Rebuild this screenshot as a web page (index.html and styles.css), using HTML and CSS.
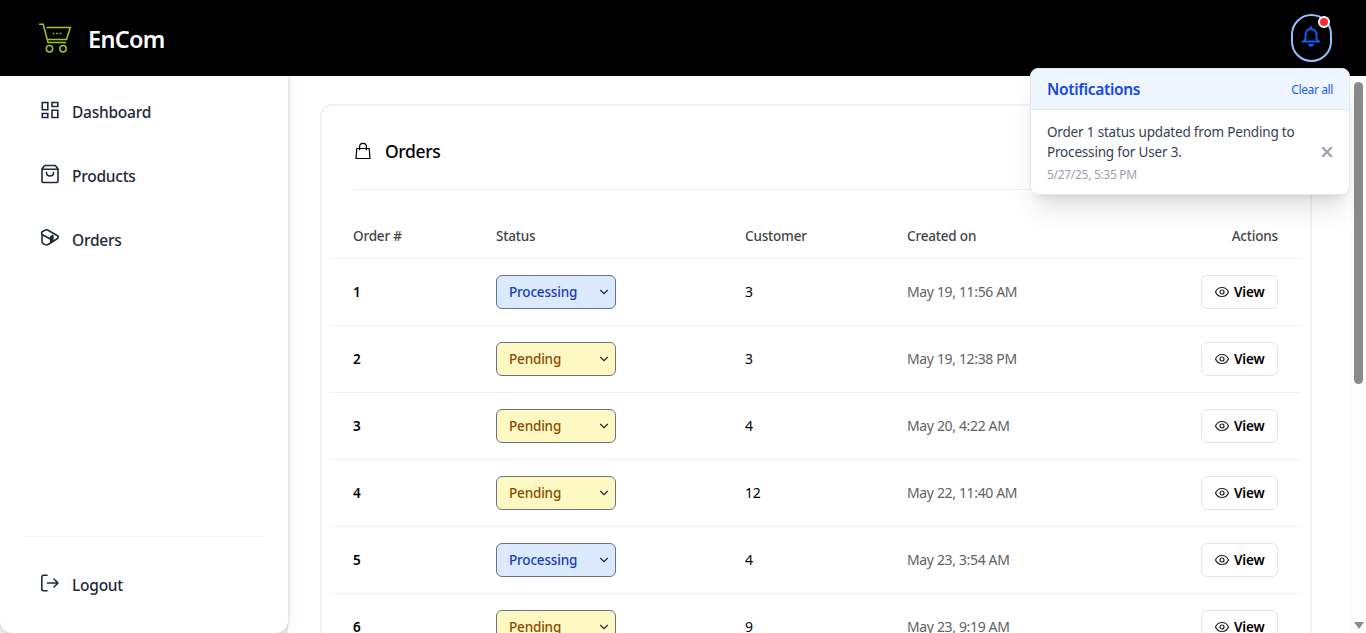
FILE: index.html
```html
<!DOCTYPE html>
<html lang="en">
<head>
<meta charset="utf-8">
<title>EnCom</title>
<link rel="stylesheet" href="styles.css">
</head>
<body>
<svg width="0" height="0" class="defs">
  <symbol id="eye" viewBox="0 0 16 16"><g fill="none" stroke="currentColor" stroke-width="1.2"><path d="M1.500 8C2.800 5 5.200 3.500 8 3.500S13.200 5 14.500 8C13.200 11 10.800 12.500 8 12.500S2.800 11 1.500 8Z"/><circle cx="8" cy="8" r="2"/></g></symbol>
  <symbol id="chev" viewBox="0 0 10 6"><path d="M1.300 1L5 4.700 8.700 1" fill="none" stroke="currentColor" stroke-width="1.200"/></symbol>
</svg>
<header class="topbar">
  <div class="brand">
    <svg class="logo" viewBox="0 0 34 32" fill="none" stroke="#9ec52a" stroke-width="1.500"><path d="M1 2.300h4.200L10 20.500M8.500 5.500h23.800L28.500 17.500H9.500M9.500 20.500h18.500"/><circle cx="11.500" cy="26.800" r="3.200"/><circle cx="25" cy="26.800" r="3.200"/><path d="M14.700 11.500h1.600M18.200 11.500h1.600M21.700 11.500h1.600"/></svg>
    <span class="brand-name">EnCom</span>
  </div>
  <button class="bell" aria-label="Notifications">
    <svg width="20" height="22" viewBox="0 0 20 22"><path d="M1.700 15.500h16.600M3.200 15.200l1.300-2.200V8.500a5.500 5.500 0 0 1 11 0V13l1.300 2.200M10 3V1" fill="none" stroke="#155dfc" stroke-width="1.900" stroke-linecap="round" stroke-linejoin="round"/><path d="M7 17.800h6a3 2.800 0 0 1-6 0Z" fill="#155dfc"/></svg>
    <span class="dot"></span>
  </button>
</header>
<div class="shell">
  <nav class="sidebar">
    <div class="links">
      <a class="link"><svg class="ico" viewBox="0 0 20 20" fill="none" stroke="currentColor" stroke-width="1.600"><path d="M2.300 2.500h5.500v7.300H2.300zM12 2.500h5.800v4H12zM2.300 13.500h5.500v4H2.300zM12 10.200h5.800v7.300H12z"/></svg><span>Dashboard</span></a>
      <a class="link"><svg class="ico" viewBox="0 0 20 20" fill="none" stroke="currentColor" stroke-width="1.600" stroke-linejoin="round" stroke-linecap="round"><path d="M2 4.800L4.700 1.500h10.600L18 4.800V17a1.500 1.500 0 0 1-1.500 1.500h-13A1.500 1.500 0 0 1 2 17ZM2 5.200h16M6.500 8.500c0 4.700 7 4.700 7 0"/></svg><span>Products</span></a>
      <a class="link"><svg class="ico" viewBox="0 0 20 20" fill="none" stroke="currentColor" stroke-width="1.600" stroke-linejoin="round" stroke-linecap="round"><path d="M2 6.500Q.800 4.300 3 3.200L5.500 2Q6.800 1.500 8 2.200L17.500 7.700Q19.300 9 17.500 10.500L8.500 16.200Q7 17.500 5.200 16.600L3.200 15.500Q2 14.800 2 13.300ZM2 6.500L10.700 11.200"/><path d="M10.700 14.500V9Q10.700 8 12.800 7.500V13.300M11.700 8.500V13.800"/></svg><span>Orders</span></a>
    </div>
    <div class="foot"><a class="link"><svg class="ico" viewBox="0 0 20 20" fill="none" stroke="currentColor" stroke-width="1.600" stroke-linecap="round" stroke-linejoin="round"><path d="M7 2.200H3.500Q1.800 2.200 1.800 3.900v12.100q0 1.700 1.700 1.700H7M7.500 10h10.500M14 6L18 10l-4 4"/></svg><span>Logout</span></a></div>
  </nav>
  <main class="main">
    <section class="card">
      <div class="card-head"><svg width="16" height="18" viewBox="0 0 16 18" fill="none" stroke="#000" stroke-width="1.200"><path d="M1.800 6.500h12.400L15 16.500H1ZM4.600 8.300V4.800a3.400 3.400 0 0 1 6.800 0V8.300"/></svg><h1>Orders</h1></div>
      <table class="orders">
        <colgroup><col class="c1"><col class="c2"><col class="c3"><col class="c4"><col></colgroup>
        <thead><tr><th>Order #</th><th>Status</th><th>Customer</th><th>Created on</th><th class="right">Actions</th></tr></thead>
        <tbody>
          <tr><td class="num">1</td><td class="ctl"><div class="select blue">Processing<svg><use href="#chev"/></svg></div></td><td>3</td><td class="date">May 19, 11:56 AM</td><td class="ctl right"><button class="view"><svg><use href="#eye"/></svg><span>View</span></button></td></tr>
          <tr><td class="num">2</td><td class="ctl"><div class="select yellow">Pending<svg><use href="#chev"/></svg></div></td><td>3</td><td class="date">May 19, 12:38 PM</td><td class="ctl right"><button class="view"><svg><use href="#eye"/></svg><span>View</span></button></td></tr>
          <tr><td class="num">3</td><td class="ctl"><div class="select yellow">Pending<svg><use href="#chev"/></svg></div></td><td>4</td><td class="date">May 20, 4:22 AM</td><td class="ctl right"><button class="view"><svg><use href="#eye"/></svg><span>View</span></button></td></tr>
          <tr><td class="num">4</td><td class="ctl"><div class="select yellow">Pending<svg><use href="#chev"/></svg></div></td><td>12</td><td class="date">May 22, 11:40 AM</td><td class="ctl right"><button class="view"><svg><use href="#eye"/></svg><span>View</span></button></td></tr>
          <tr><td class="num">5</td><td class="ctl"><div class="select blue">Processing<svg><use href="#chev"/></svg></div></td><td>4</td><td class="date">May 23, 3:54 AM</td><td class="ctl right"><button class="view"><svg><use href="#eye"/></svg><span>View</span></button></td></tr>
          <tr><td class="num">6</td><td class="ctl"><div class="select yellow">Pending<svg><use href="#chev"/></svg></div></td><td>9</td><td class="date">May 23, 9:19 AM</td><td class="ctl right"><button class="view"><svg><use href="#eye"/></svg><span>View</span></button></td></tr>
        </tbody>
      </table>
    </section>
  </main>
  <div class="scrollbar"><div class="thumb"></div><div class="arrow"></div></div>
</div>
<aside class="popover">
  <div class="pop-head"><h2>Notifications</h2><span class="clear">Clear all</span></div>
  <div class="pop-item">
    <div><p class="msg">Order 1 status updated from Pending to<br>Processing for User 3.</p><p class="time">5/27/25, 5:35 PM</p></div>
    <svg width="12" height="12" viewBox="0 0 12 12"><path d="M1.300 1.300l9.400 9.400M10.700 1.300l-9.400 9.400" stroke="#99a1af" stroke-width="2.200"/></svg>
  </div>
</aside>
</body>
</html>
```
FILE: styles.css
```css
* { box-sizing: border-box; margin: 0; }
body { height: 633px; overflow: hidden; background: #fff; font-family: "Noto Sans", "Open Sans", sans-serif; font-size: 14px; color: #000; display: flex; flex-direction: column; position: relative; }
.defs { position: absolute; }
button { font: inherit; color: inherit; background: none; }
.topbar { height: 76px; flex: none; background: #000; display: flex; justify-content: space-between; align-items: center; padding: 0 34px 0 38px; }
.brand { display: flex; align-items: center; gap: 16px; }
.logo { width: 34px; height: 32px; }
.brand-name { color: #fff; font-size: 23.500px; font-weight: 600; letter-spacing: -.7px; line-height: 32px; padding-top: 2px; }
.bell { position: relative; width: 41px; height: 48px; border: 2px solid #8ec5ff; border-radius: 21px; padding: 0; display: flex; align-items: center; justify-content: center; }
.bell svg { margin: -2px 1px 0 0; }
.dot { position: absolute; right: 0; top: 0; width: 12px; height: 12px; border-radius: 50%; background: #fb2c36; border: 2px solid #fff; }
.shell { flex: 1; min-height: 0; display: flex; background: linear-gradient(to right, #ececee 288px, #fff 288px); }
.sidebar { width: 288px; flex: none; background: #fff; border-radius: 0 0 12px 12px; box-shadow: 0 0 4px rgba(0,0,0,.18), 4px 0 12px rgba(0,0,0,.03); clip-path: inset(0 -20px 0 0); display: flex; flex-direction: column; justify-content: space-between; padding: 12px 24px 16px; }
.links { display: flex; flex-direction: column; gap: 16px; }
.link { height: 48px; display: flex; align-items: center; gap: 12px; padding: 0 16px; font-size: 15.500px; font-weight: 500; color: #1e2939; letter-spacing: -.24px; }
.link span { padding-bottom: 1px; }
.ico { width: 20px; height: 20px; margin-top: -4px; }
.foot { border-top: 1px solid #f3f3f5; padding-top: 24px; height: 81px; }
.main { flex: 1; min-width: 0; padding: 28px 40px 0 32px; overflow: hidden; }
.card { width: 992px; height: 700px; border: 2px solid #f2f2f2; border-radius: 12px; padding: 0 7px; }
.card-head { height: 84px; margin: 0 24px 24px; display: flex; align-items: center; gap: 14px; padding: 7px 0 0 2px; border-bottom: 1px solid #efefef; }
h1 { font-size: 17.500px; font-weight: 500; letter-spacing: -.35px; }
.orders { width: 973px; table-layout: fixed; border-collapse: separate; border-spacing: 0; }
.c1 { width: 143px; }
.c2 { width: 249px; }
.c3 { width: 162px; }
.c4 { width: 230px; }
th, td { padding: 0 24px; text-align: left; border-bottom: 1px solid #f1f1f1; }
th { height: 45px; font-weight: 500; font-size: 13.500px; color: #454545; letter-spacing: -.18px; }
td { height: 67px; padding-bottom: 2px; letter-spacing: -.35px; }
td.ctl { padding-bottom: 0; }
td.num { font-weight: 600; font-size: 13.500px; padding-bottom: 0; }
.date { color: #626262; letter-spacing: -.35px; }
.right { text-align: right; }
.select { width: 120px; height: 34px; border: 1px solid #6a7282; border-radius: 6px; display: flex; align-items: center; justify-content: space-between; padding: 0 6px 0 12px; font-size: 13.500px; font-weight: 500; letter-spacing: -.17px; }
.select svg { width: 10px; height: 6px; color: #222; }
.blue { background: #dbeafe; color: #193cb8; }
.yellow { background: #fef9c2; color: #894b00; }
.view { width: 77px; height: 34px; border: 1px solid #e5e5e5; border-radius: 6px; display: inline-flex; align-items: center; gap: 4px; padding: 0 12px; font-weight: 600; font-size: 13.500px; letter-spacing: -.15px; vertical-align: middle; }
.view span { padding-bottom: 1px; }
.view svg { width: 16px; height: 16px; color: #222; }
.scrollbar { width: 15px; background: #fcfcfc; display: flex; flex-direction: column; align-items: center; justify-content: space-between; padding: 6px 0 4px; }
.thumb { width: 9px; height: 302px; border-radius: 5px; background: #8b8b8b; }
.arrow { border: 5px solid transparent; border-top: 7px solid #8b8b8b; border-bottom: 0; }
.popover { position: absolute; left: 1030px; top: 68px; width: 320px; height: 127px; background: #fff; border: 1px solid #e5e7eb; border-radius: 8px; overflow: hidden; box-shadow: 0 20px 25px -5px rgba(0,0,0,.1), 0 8px 10px -6px rgba(0,0,0,.1); }
.pop-head { height: 41px; display: flex; align-items: center; justify-content: space-between; padding: 0 16px; background: #eff6ff; border-bottom: 1px solid #e5e7eb; }
h2 { font-size: 15.500px; font-weight: 600; color: #1447e6; letter-spacing: -.32px; }
.clear { font-size: 12px; color: #155dfc; letter-spacing: -.38px; padding-top: 1px; }
.pop-item { display: flex; justify-content: space-between; align-items: center; padding: 12px 16px; }
.msg { font-size: 13.500px; line-height: 20px; color: #364153; letter-spacing: -.18px; white-space: nowrap; }
.time { margin-top: 5px; font-size: 12px; line-height: 16px; color: #99a1af; letter-spacing: -.3px; margin-bottom: -1px; }
```
